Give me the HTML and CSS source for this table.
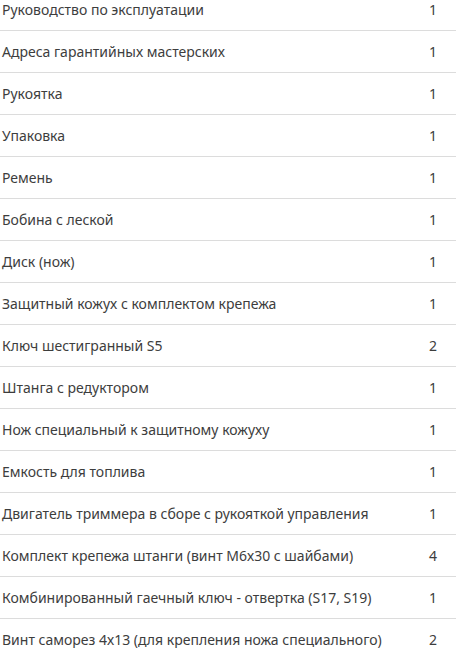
FILE: index.html
```html
<!DOCTYPE html>
<html lang="ru">
<head>
    <meta charset="UTF-8">
    <meta name="viewport" content="width=device-width, initial-scale=1.0">
    <title>Комплектация</title>
    <link rel="stylesheet" href="styles.css">
</head>
<body>
    <div class="kit-list">
        <div class="kit-row"><span class="kit-name">Руководство по эксплуатации</span><span class="kit-qty">1</span></div>
        <div class="kit-row"><span class="kit-name">Адреса гарантийных мастерских</span><span class="kit-qty">1</span></div>
        <div class="kit-row"><span class="kit-name">Рукоятка</span><span class="kit-qty">1</span></div>
        <div class="kit-row"><span class="kit-name">Упаковка</span><span class="kit-qty">1</span></div>
        <div class="kit-row"><span class="kit-name">Ремень</span><span class="kit-qty">1</span></div>
        <div class="kit-row"><span class="kit-name">Бобина с леской</span><span class="kit-qty">1</span></div>
        <div class="kit-row"><span class="kit-name">Диск (нож)</span><span class="kit-qty">1</span></div>
        <div class="kit-row"><span class="kit-name">Защитный кожух с комплектом крепежа</span><span class="kit-qty">1</span></div>
        <div class="kit-row"><span class="kit-name">Ключ шестигранный S5</span><span class="kit-qty">2</span></div>
        <div class="kit-row"><span class="kit-name">Штанга с редуктором</span><span class="kit-qty">1</span></div>
        <div class="kit-row"><span class="kit-name">Нож специальный к защитному кожуху</span><span class="kit-qty">1</span></div>
        <div class="kit-row"><span class="kit-name">Емкость для топлива</span><span class="kit-qty">1</span></div>
        <div class="kit-row"><span class="kit-name">Двигатель триммера в сборе с рукояткой управления</span><span class="kit-qty">1</span></div>
        <div class="kit-row"><span class="kit-name">Комплект крепежа штанги (винт М6х30 с шайбами)</span><span class="kit-qty">4</span></div>
        <div class="kit-row"><span class="kit-name">Комбинированный гаечный ключ - отвертка (S17, S19)</span><span class="kit-qty">1</span></div>
        <div class="kit-row"><span class="kit-name">Винт саморез 4х13 (для крепления ножа специального)</span><span class="kit-qty">2</span></div>
    </div>
</body>
</html>
```

FILE: styles.css
```css
* {
    margin: 0;
    padding: 0;
    box-sizing: border-box;
}

body {
    background-color: #fff;
    font-family: 'Noto Sans', 'Liberation Sans', sans-serif;
    font-size: 14px;
    color: #3d3d3d;
    overflow: hidden;
}

/* list is scrolled a little, first row is cut at the top */
.kit-list {
    margin-top: -11px;
}

.kit-row {
    display: flex;
    align-items: center;
    justify-content: space-between;
    height: 42px;
    border-bottom: 1px solid #dcdcdc;
    padding-left: 2px;
}

.kit-name {
    white-space: nowrap;
}

.kit-qty {
    width: 46px;
    text-align: center;
}
```
